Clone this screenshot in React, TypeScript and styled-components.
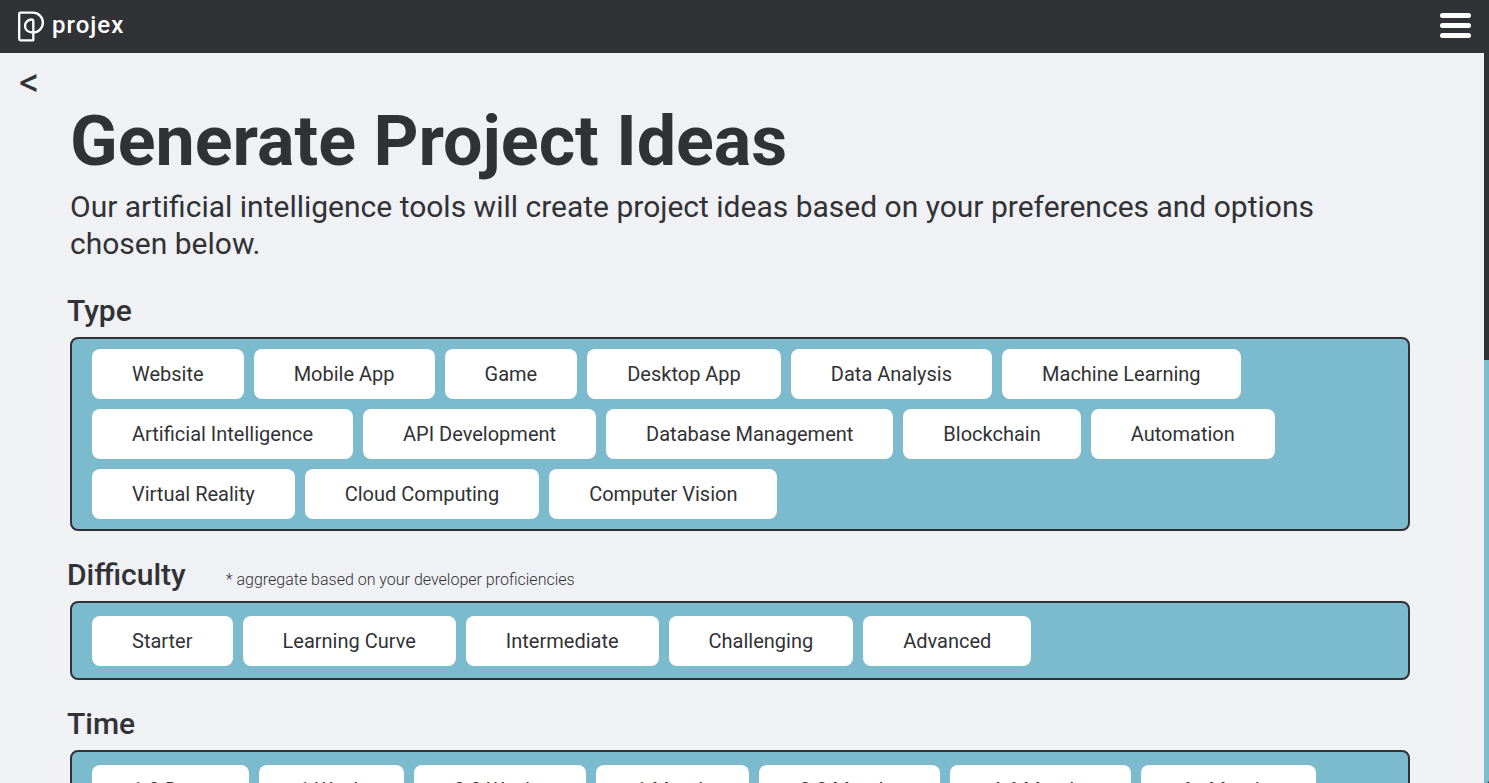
import React from "react";
import styled, { createGlobalStyle } from "styled-components";

const ink = "#313236";
const teal = "#7cbacd";
const paper = "#eff1f5";

const GlobalStyle = createGlobalStyle`
  *, *::before, *::after { box-sizing: border-box; }
  html, body, #root { height: 100%; }
  body {
    margin: 0;
    overflow: hidden;
    background: ${paper};
    color: ${ink};
    font-family: Roboto, "Liberation Sans", sans-serif;
  }
`;

const Page = styled.div`
  display: flex;
  height: 100vh;
  background: ${ink};
`;

const Column = styled.div`
  flex: 1;
  min-width: 0;
  overflow: hidden;
  background: ${paper};
`;

const ScrollTrack = styled.div`
  flex: none;
  width: 5px;
  border-bottom-right-radius: 3px;
  background: ${teal};
`;

const ScrollThumb = styled.div`
  height: 46%;
  background: ${ink};
`;

const Header = styled.header`
  display: flex;
  align-items: center;
  justify-content: space-between;
  height: 53px;
  padding: 0 13px 2px 17px;
  background: ${ink};
`;

const Brand = styled.a`
  display: flex;
  align-items: center;
  gap: 7px;
  color: #fff;
  font-size: 24px;
  font-weight: 500;
  line-height: 28px;
  letter-spacing: 1px;
  text-decoration: none;
`;

const BrandName = styled.span`
  padding-bottom: 2px;
`;

const MenuButton = styled.button`
  display: flex;
  flex-direction: column;
  gap: 5px;
  padding: 0;
  border: 0;
  background: none;
  cursor: pointer;
`;

const MenuBar = styled.span`
  width: 31px;
  height: 5px;
  border-radius: 3px;
  background: #fff;
`;

const BackButton = styled.button`
  display: block;
  margin: 8px 0 1px 19px;
  padding: 0;
  border: 0;
  background: none;
  color: ${ink};
  font: 400 40px/44px Roboto, sans-serif;
  cursor: pointer;
`;

const Main = styled.main`
  padding: 0 74px 0 70px;
`;

const Title = styled.h1`
  margin: 0;
  font-size: 70px;
  font-weight: 700;
  line-height: 70px;
`;

const Lead = styled.p`
  margin: 12px 0 29px;
  font-size: 30px;
  line-height: 37px;
`;

const Section = styled.section`
  margin-bottom: 24px;
`;

const SectionHead = styled.div`
  display: flex;
  align-items: baseline;
  gap: 40px;
  margin: 0 0 6px -3px;
`;

const SectionTitle = styled.h2`
  margin: 0;
  font-size: 30px;
  font-weight: 500;
  line-height: 40px;
`;

const Note = styled.p`
  margin: 0;
  font-size: 16px;
  font-weight: 300;
  line-height: 20px;
`;

const Options = styled.div<{ $roomy?: boolean }>`
  display: flex;
  flex-wrap: wrap;
  gap: 10px;
  padding: ${(p) => (p.$roomy ? "13px 20px 12px" : "10px 20px")};
  border: 2px solid ${ink};
  border-radius: 8px;
  background: ${teal};
`;

const Option = styled.button`
  height: 50px;
  padding: 0 40px;
  border: 0;
  border-radius: 8px;
  background: #fff;
  color: ${ink};
  font: 400 20px/24px Roboto, sans-serif;
  white-space: nowrap;
  cursor: pointer;
`;

const groups = [
  {
    title: "Type",
    roomy: false,
    options: [
      "Website", "Mobile App", "Game", "Desktop App", "Data Analysis", "Machine Learning",
      "Artificial Intelligence", "API Development", "Database Management", "Blockchain",
      "Automation", "Virtual Reality", "Cloud Computing", "Computer Vision",
    ],
  },
  {
    title: "Difficulty",
    note: "* aggregate based on your developer proficiencies",
    roomy: true,
    options: ["Starter", "Learning Curve", "Intermediate", "Challenging", "Advanced"],
  },
  {
    title: "Time",
    roomy: true,
    options: ["1-3 Days", "1 Week", "2-3 Weeks", "1 Month", "2-3 Months", "4-6 Months", "6+ Months"],
  },
];

const Logo = () => (
  <svg width="28" height="32" viewBox="0 0 28 32" fill="none" stroke="#fff" strokeWidth="2.3" strokeLinejoin="round" aria-hidden="true">
    <path d="M16.300 22V30.300H3.500Q2.200 30.300 2.200 29V4Q2.200 2.700 3.500 2.700H16A9.900 9.900 0 0 1 16 22.500C11 22.500 8 19.800 8 16C8 12.200 11 9.500 14.500 9.500Q16.300 9.500 16.300 11.300V22" />
  </svg>
);

export default function App() {
  return (
    <>
      <GlobalStyle />
      <Page>
        <Column>
          <Header>
            <Brand href="#">
              <Logo />
              <BrandName>projex</BrandName>
            </Brand>
            <MenuButton aria-label="Menu">
              <MenuBar />
              <MenuBar />
              <MenuBar />
            </MenuButton>
          </Header>
          <BackButton aria-label="Back">&lt;</BackButton>
          <Main>
            <Title>Generate Project Ideas</Title>
            <Lead>
              Our artificial intelligence tools will create project ideas based on your preferences
              and options chosen below.
            </Lead>
            {groups.map((group) => (
              <Section key={group.title} aria-label={group.title}>
                <SectionHead>
                  <SectionTitle>{group.title}</SectionTitle>
                  {group.note && <Note>{group.note}</Note>}
                </SectionHead>
                <Options $roomy={group.roomy}>
                  {group.options.map((option) => (
                    <Option key={option}>{option}</Option>
                  ))}
                </Options>
              </Section>
            ))}
          </Main>
        </Column>
        <ScrollTrack>
          <ScrollThumb />
        </ScrollTrack>
      </Page>
    </>
  );
}
